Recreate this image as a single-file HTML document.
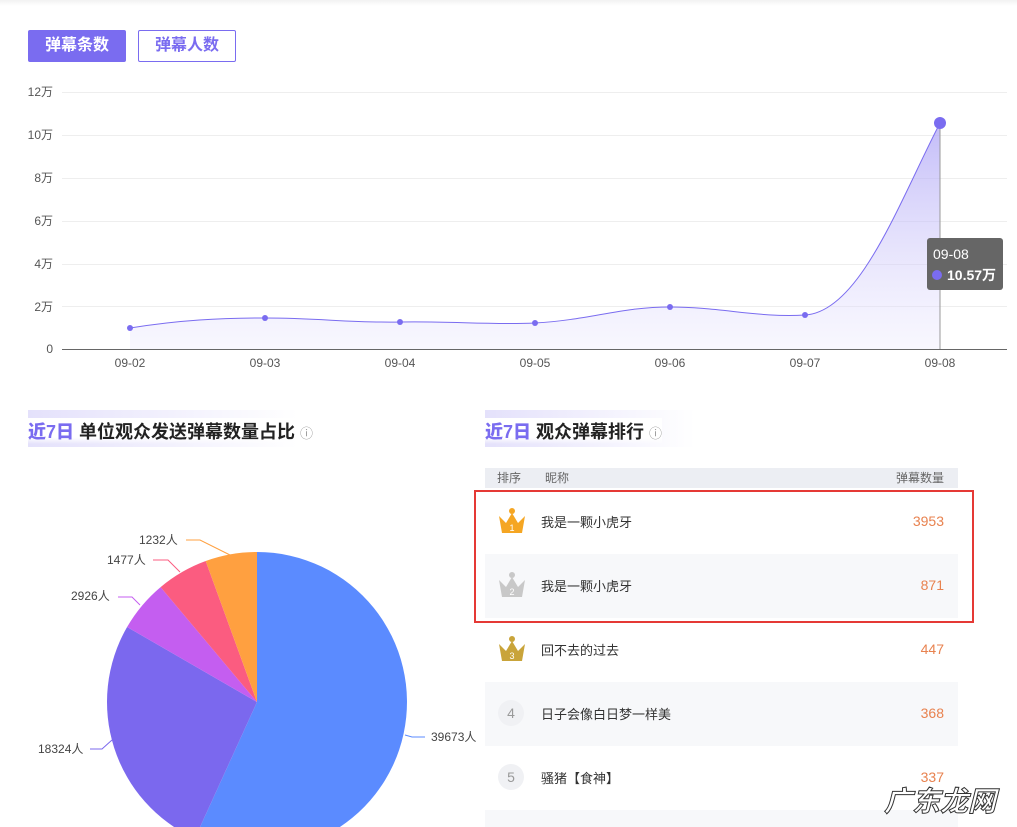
<!DOCTYPE html>
<html style="overflow:hidden;height:827px"><head><meta charset="utf-8"><style>
*{margin:0;padding:0;box-sizing:border-box}
body{width:1017px;height:827px;overflow:hidden;background:#fff;font-family:"Liberation Sans","Noto Sans CJK SC",sans-serif;position:relative;color:#333}
.a{position:absolute}
.btn{position:absolute;top:30px;height:32px;width:98px;border:1px solid #7a6cf0;border-radius:2px;font-size:16px;font-weight:bold;text-align:center;line-height:30px}
.t{position:absolute;font-size:18px;font-weight:bold;color:#222}
.t b{color:#7a6cf0}
.row{position:absolute;left:485px;width:473px;height:64px;font-size:13px;color:#333}
.row .n{position:absolute;left:56px;top:22px}
.row .v{position:absolute;right:14px;top:23px;color:#e8824f;font-size:14px}
.bg{background:#f7f8fa}
.num{position:absolute;left:13px;top:18px;width:26px;height:26px;border-radius:50%;background:#f0f1f4;color:#999;text-align:center;line-height:26px;font-size:14px}
</style></head><body>
<div class="a" style="left:0;top:0;width:1017px;height:6px;background:linear-gradient(#f2f2f2,#fff)"></div>
<div class="btn" style="left:28px;background:#7a6cf0;color:#fff">弹幕条数</div>
<div class="btn" style="left:138px;color:#7a6cf0;background:#fff">弹幕人数</div>
<svg class="a" style="left:0;top:80px" width="1017" height="300">
<g stroke="#eee" stroke-width="1">
<line x1="62" y1="12.5" x2="1007" y2="12.5"/><line x1="62" y1="55.5" x2="1007" y2="55.5"/><line x1="62" y1="98.5" x2="1007" y2="98.5"/><line x1="62" y1="141.5" x2="1007" y2="141.5"/><line x1="62" y1="184.5" x2="1007" y2="184.5"/><line x1="62" y1="226.5" x2="1007" y2="226.5"/></g>
<line x1="62" y1="269.5" x2="1007" y2="269.5" stroke="#666"/>
<g font-size="12" fill="#555" text-anchor="end"><text x="53" y="16">12万</text><text x="53" y="59">10万</text><text x="53" y="102">8万</text><text x="53" y="145">6万</text><text x="53" y="188">4万</text><text x="53" y="231">2万</text><text x="53" y="273">0</text></g>
<g font-size="12" fill="#555" text-anchor="middle"><text x="130" y="287">09-02</text><text x="265" y="287">09-03</text><text x="400" y="287">09-04</text><text x="535" y="287">09-05</text><text x="670" y="287">09-06</text><text x="805" y="287">09-07</text><text x="940" y="287">09-08</text></g>
<defs><linearGradient id="g" x1="0" y1="0" x2="0" y2="1"><stop offset="0" stop-color="#a99ff5" stop-opacity=".7"/><stop offset="1" stop-color="#e8e5fd" stop-opacity=".3"/></linearGradient></defs>
<path d="M130 248 C180 240 220 238 265 238 C320 238 350 243 400 242 C450 241 490 245 535 243 C590 240 620 227 670 227 C720 227 760 238 805 235 C860 232 900 120 940 43 L940 269 L130 269Z" fill="url(#g)"/>
<path d="M130 248 C180 240 220 238 265 238 C320 238 350 243 400 242 C450 241 490 245 535 243 C590 240 620 227 670 227 C720 227 760 238 805 235 C860 232 900 120 940 43" fill="none" stroke="#7a6cf0" stroke-width="1"/>
<line x1="940" y1="43" x2="940" y2="269" stroke="#999"/>
<g fill="#7a6cf0"><circle cx="130" cy="248" r="3"/><circle cx="265" cy="238" r="3"/><circle cx="400" cy="242" r="3"/><circle cx="535" cy="243" r="3"/><circle cx="670" cy="227" r="3"/><circle cx="805" cy="235" r="3"/><circle cx="940" cy="43" r="6"/></g>
<rect x="927" y="158" width="76" height="52" rx="3" fill="#666"/>
<text x="933" y="179" fill="#fff" font-size="14">09-08</text>
<circle cx="937" cy="195" r="5" fill="#7a6cf0"/>
<text x="947" y="200" fill="#fff" font-size="14" font-weight="bold">10.57万</text>
</svg>
<div class="a" style="left:28px;top:410px;width:270px;height:37px;background:linear-gradient(90deg,#e4e1fb,#fff)"></div>
<div class="t" style="left:28px;top:418px;background:linear-gradient(#fff 75%,transparent)"><b>近7日</b> 单位观众发送弹幕数量占比 <span style="font-size:13px;color:#999;font-weight:normal">ⓘ</span></div>
<div class="a" style="left:485px;top:410px;width:210px;height:37px;background:linear-gradient(90deg,#e4e1fb,#fff)"></div>
<div class="t" style="left:485px;top:418px;background:linear-gradient(#fff 75%,transparent)"><b>近7日</b> 观众弹幕排行 <span style="font-size:13px;color:#999;font-weight:normal">ⓘ</span></div>
<svg class="a" style="left:0;top:520px" width="480" height="307">
<g transform="translate(0,-520)">
<path d="M257 702 L257 552 A150 150 0 1 1 194.8 838.5Z" fill="#5b8bff"/>
<path d="M257 702 L194.8 838.5 A150 150 0 0 1 127.1 627Z" fill="#7b68ee"/>
<path d="M257 702 L127.1 627 A150 150 0 0 1 160.6 587.1Z" fill="#c45ef0"/>
<path d="M257 702 L160.6 587.1 A150 150 0 0 1 205.7 561Z" fill="#fb5c80"/>
<path d="M257 702 L205.7 561 A150 150 0 0 1 257 552Z" fill="#ffa040"/>
<g fill="none" stroke-width="1"><polyline points="186,540 200,540 230,555" stroke="#ffa040"/><polyline points="153,560 168,560 180,572" stroke="#fb5c80"/><polyline points="118,597 132,597 140,605" stroke="#c45ef0"/><polyline points="90,749 102,749 112,740" stroke="#7b68ee"/><polyline points="405,735 412,737 425,737" stroke="#5b8bff"/></g>
<g font-size="12" fill="#444"><text x="139" y="544">1232人</text><text x="107" y="564">1477人</text><text x="71" y="600">2926人</text><text x="38" y="753">18324人</text><text x="431" y="741">39673人</text></g>
</g></svg>
<div class="a" style="left:485px;top:468px;width:473px;height:20px;background:#eceef3;font-size:12px;color:#666;line-height:20px"><span style="margin-left:12px">排序</span><span style="margin-left:24px">昵称</span><span style="position:absolute;right:14px">弹幕数量</span></div>
<div class="row" style="top:490px"><svg class="a" style="left:13px;top:17px" width="28" height="28"><circle cx="14" cy="4" r="3" fill="#f5a623"/><path d="M1 9 L8 16 L14 6 L20 16 L27 9 L24 26 L4 26Z" fill="#f5a623"/><text x="14" y="24" font-size="9" fill="#fff" text-anchor="middle">1</text></svg><span class="n">我是一颗小虎牙</span><span class="v">3953</span></div>
<div class="row bg" style="top:554px"><svg class="a" style="left:13px;top:17px" width="28" height="28"><circle cx="14" cy="4" r="3" fill="#c8c8c8"/><path d="M1 9 L8 16 L14 6 L20 16 L27 9 L24 26 L4 26Z" fill="#c8c8c8"/><text x="14" y="24" font-size="9" fill="#fff" text-anchor="middle">2</text></svg><span class="n">我是一颗小虎牙</span><span class="v">871</span></div>
<div class="row" style="top:618px"><svg class="a" style="left:13px;top:17px" width="28" height="28"><circle cx="14" cy="4" r="3" fill="#c9a43a"/><path d="M1 9 L8 16 L14 6 L20 16 L27 9 L24 26 L4 26Z" fill="#c9a43a"/><text x="14" y="24" font-size="9" fill="#fff" text-anchor="middle">3</text></svg><span class="n">回不去的过去</span><span class="v">447</span></div>
<div class="row bg" style="top:682px"><div class="num">4</div><span class="n">日子会像白日梦一样美</span><span class="v">368</span></div>
<div class="row" style="top:746px"><div class="num">5</div><span class="n">骚猪【食神】</span><span class="v">337</span></div>
<div class="row bg" style="top:810px;height:17px"></div>
<div class="a" style="left:474px;top:490px;width:500px;height:133px;border:2px solid #e53935"></div>
<div class="a" style="left:884px;top:780px;font-size:28px;color:#fff;font-style:italic;font-weight:bold;-webkit-text-stroke:1px #333">广东龙网</div>
</body></html>
